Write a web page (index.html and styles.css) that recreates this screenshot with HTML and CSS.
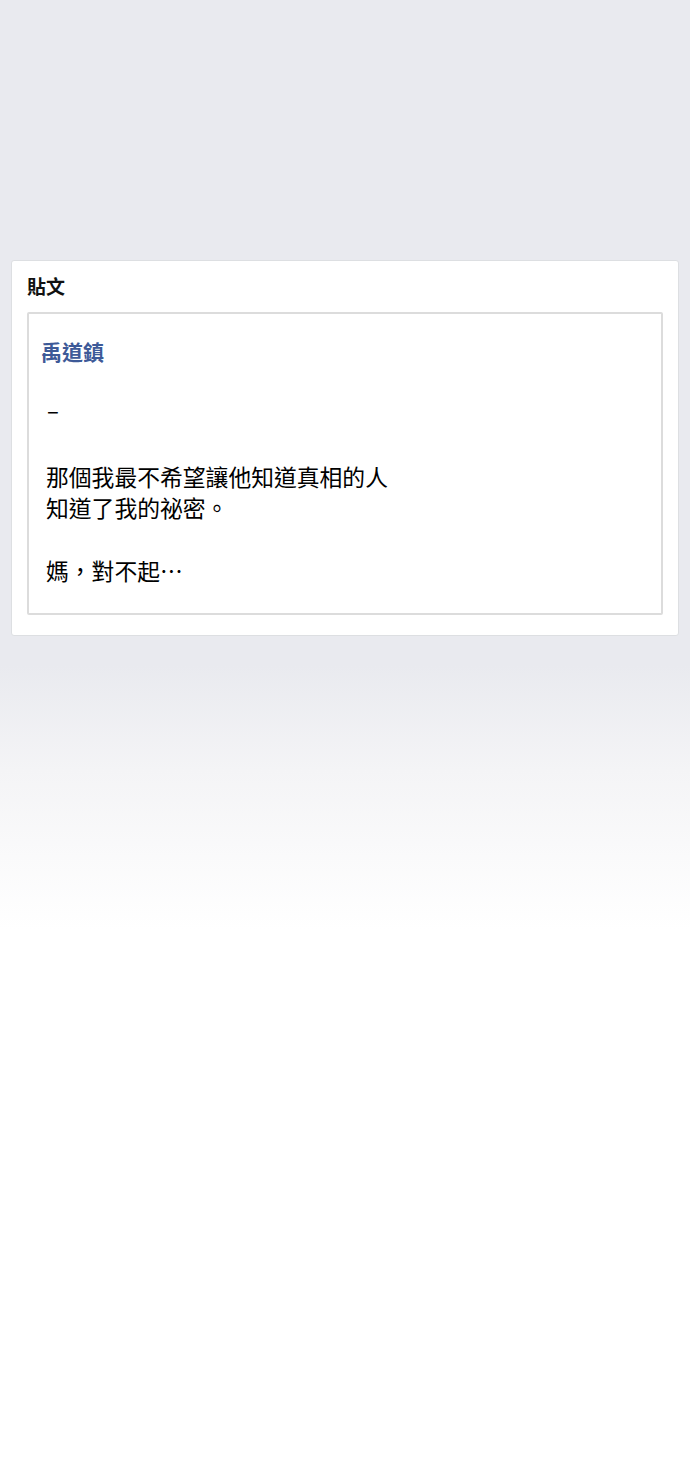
FILE: index.html
```html
<!DOCTYPE html>
<html>
<head>
    <meta charset="utf-8" />
    <title>貼文</title>
    <link rel="stylesheet" href="styles.css">
</head>
<body>
<div class="page">
    <div class="post_card">
        <h2 class="card_tit">貼文</h2>
        <div class="post_box">
            <h3 class="author">禹道鎮</h3>
            <p class="dash">–</p>
            <p class="post_text">那個我最不希望讓他知道真相的人<br />知道了我的祕密。</p>
            <p class="post_text">媽，對不起⋯</p>
        </div>
    </div>
</div>
</body>
</html>
```

FILE: styles.css
```css
html,body {margin:0;padding:0;}
body {font-family:"Noto Sans CJK TC", "Noto Sans", sans-serif;color:#1c1e21;background:linear-gradient(to bottom, #e9eaef 0, #e9eaef 665px, #f4f4f6 770px, #ffffff 930px, #ffffff 100%);min-height:1476px;}
.page {padding:260px 11px 0;}
.post_card {background:#fff;border:1px solid #dddfe2;border-radius:3px;padding:0 15px 20px;}
.card_tit {margin:0;padding:12px 0 0;font-size:19px;line-height:26px;font-weight:bold;color:#111;}
.post_box {margin-top:13px;border:2px solid #dcdcdc;border-radius:2px;padding:22px 12px 27px;}
.author {margin:0;font-size:21px;line-height:30px;font-weight:bold;color:#3d5a98;}
.dash {margin:28px 0 0 6px;font-size:22px;line-height:30px;color:#000;}
.post_text {margin:37px 0 0 5px;font-size:22.8px;line-height:31px;color:#000;}
.post_text + .post_text {margin-top:32px;}
```
